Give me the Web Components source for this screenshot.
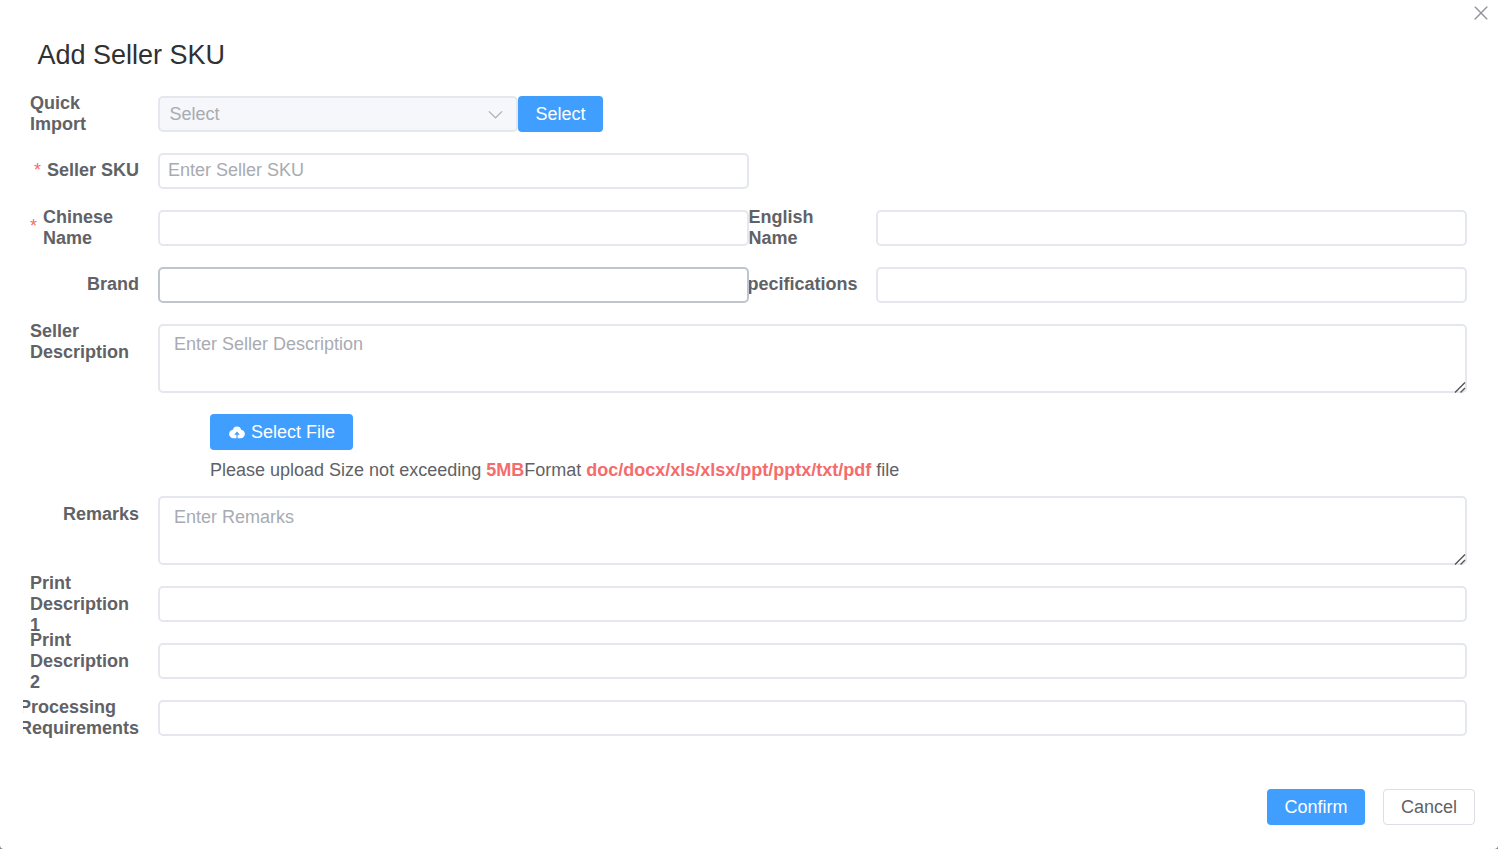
<!DOCTYPE html>
<html>
<head>
<meta charset="utf-8">
<title>Add Seller SKU</title>
<style>
html, body { margin: 0; height: 100%; background: #808080; }
body { font-family: "Liberation Sans", Arial, sans-serif; font-size: 18px; color: #606266; overflow: hidden; }
</style>
</head>
<body>

<sku-dialog>
  <span slot="title">Add Seller SKU</span>

  <form-row>
    <form-item label="Quick Import">
      <select-box>Select</select-box>
      <blue-button>Select</blue-button>
    </form-item>
  </form-row>

  <form-row half>
    <form-item label="Seller SKU" required tight><text-field tight>Enter Seller SKU</text-field></form-item>
  </form-row>

  <form-row>
    <form-item label="Chinese Name" required><text-field></text-field></form-item>
    <form-item label="English Name"><text-field></text-field></form-item>
  </form-row>

  <form-row>
    <form-item label="Brand" tight><text-field focused></text-field></form-item>
    <form-item label="Specifications" tight><text-field></text-field></form-item>
  </form-row>

  <form-row>
    <form-item label="Seller Description"><text-area>Enter Seller Description</text-area></form-item>
  </form-row>

  <upload-box></upload-box>

  <form-row>
    <form-item label="Remarks"><text-area low>Enter Remarks</text-area></form-item>
  </form-row>

  <form-row>
    <form-item label="Print Description 1"><text-field></text-field></form-item>
  </form-row>
  <form-row>
    <form-item label="Print Description 2"><text-field></text-field></form-item>
  </form-row>
  <form-row>
    <form-item label="Processing Requirements"><text-field></text-field></form-item>
  </form-row>

  <blue-button slot="footer">Confirm</blue-button>
  <plain-button slot="footer">Cancel</plain-button>
</sku-dialog>

<script>
class SkuDialog extends HTMLElement {
  constructor() {
    super()
    this.attachShadow({mode: 'open'}).innerHTML = `
<style>
:host { display: flex; flex-direction: column; height: 849px; box-sizing: border-box; background: #fff; border-radius: 0 0 4px 4px; }
header { padding: 39px 0 0 37.5px; height: 96px; box-sizing: border-box; position: relative; }
h2 { margin: 0; font-size: 27px; line-height: 33px; font-weight: 400; color: #303133; }
.close { position: absolute; top: 2px; right: 6px; width: 22px; height: 22px; fill: #909399; }
main { padding: 0 31px 0 23px; flex: 1; }
footer { display: flex; justify-content: flex-end; gap: 18px; padding: 0 23px 24px 0; }
</style>
<header>
  <h2><slot name="title"></slot></h2>
  <svg class="close" viewBox="0 0 1024 1024"><path d="M764.288 214.592 512 466.88 259.712 214.592a31.936 31.936 0 0 0-45.12 45.12L466.752 512 214.528 764.224a31.936 31.936 0 1 0 45.12 45.184L512 557.184l252.288 252.288a31.936 31.936 0 0 0 45.12-45.12L557.12 512.064l252.288-252.352a31.936 31.936 0 1 0-45.12-45.184z"/></svg>
</header>
<main><slot></slot></main>
<footer><slot name="footer"></slot></footer>`
  }
}

class FormRow extends HTMLElement {
  constructor() {
    super()
    this.attachShadow({mode: 'open'}).innerHTML = `
<style>
:host { display: grid; grid-template-columns: repeat(2, 1fr); margin-bottom: 21px; padding-left: 7px; overflow-x: clip; overflow-y: visible; }
::slotted(:only-child) { grid-column: 1 / -1; }
:host([half]) ::slotted(:only-child) { grid-column: auto; }
</style>
<slot></slot>`
  }
}

class FormItem extends HTMLElement {
  constructor() {
    super()
    const star = this.hasAttribute('required') ? '<i>*</i>' : ''
    this.attachShadow({mode: 'open'}).innerHTML = `
<style>
:host { display: flex; min-width: 0; }
:host(:nth-child(2)) { overflow-x: clip; overflow-y: visible; }
label { flex: none; box-sizing: border-box; width: 128px; height: 36px; padding-right: 19px; display: flex; align-items: center; justify-content: flex-end; font-weight: 700; line-height: 21px; color: #606266; }
:host(:nth-child(2)) label { width: 127.5px; padding-right: 18.5px; }
:host([tight]) label { height: 35px; }
i { font-style: normal; font-weight: 400; color: #f56c6c; margin: 0 6px 4px 0; }
:host([tight]) i { margin-bottom: 0; }
.control { flex: 1; min-width: 0; display: flex; }
</style>
<label>${star}<span>${this.getAttribute('label')}</span></label>
<div class="control"><slot></slot></div>`
  }
}

class TextField extends HTMLElement {
  constructor() {
    super()
    this.attachShadow({mode: 'open'}).innerHTML = `
<style>
:host { display: block; flex: 1; height: 36px; position: relative; }
input { display: block; width: 100%; height: 36px; box-sizing: border-box; border: 2px solid #e4e7ed; border-radius: 5px; padding: 0 9px; font: inherit; color: #606266; background: #fff; outline: none; }
:host([focused]) input { border-color: #c0c4cc; }
span { position: absolute; left: 10px; top: 0; line-height: 36px; color: #a8abb2; pointer-events: none; }
:host([tight]) span { line-height: 35px; }
</style>
<input type="text"><span><slot></slot></span>`
  }
}

class TextArea extends HTMLElement {
  constructor() {
    super()
    this.attachShadow({mode: 'open'}).innerHTML = `
<style>
:host { display: block; flex: 1; height: 69px; position: relative; }
textarea { display: block; width: 100%; height: 69px; box-sizing: border-box; border: 2px solid #e4e7ed; border-radius: 5px; padding: 5px 15px; font: inherit; color: #606266; background: #fff; outline: none; resize: none; }
span { position: absolute; left: 16px; top: 7px; line-height: 27px; color: #a8abb2; pointer-events: none; }
:host([low]) span { top: 8px; }
svg { position: absolute; right: 1px; bottom: 0; width: 12px; height: 12px; stroke: #555; stroke-width: 1.4; fill: none; }
</style>
<textarea></textarea><span><slot></slot></span>
<svg viewBox="0 0 12 12"><path d="M1 11.5 11 1.5M6.5 11.5 11 7"/></svg>`
  }
}

class SelectBox extends HTMLElement {
  constructor() {
    super()
    this.attachShadow({mode: 'open'}).innerHTML = `
<style>
:host { display: flex; align-items: center; justify-content: space-between; box-sizing: border-box; width: 360px; height: 36px; padding: 0 11.5px 0 9.5px; background: #f5f7fa; border: 2px solid #e4e7ed; border-radius: 5px; color: #a8abb2; }
svg { width: 19px; height: 19px; fill: #a8abb2; }
</style>
<span><slot></slot></span>
<svg viewBox="0 0 1024 1024"><path d="M831.872 340.864 512 652.672 192.128 340.864a30.592 30.592 0 0 0-42.752 0 29.12 29.12 0 0 0 0 41.6L489.664 714.24a32 32 0 0 0 44.672 0l340.288-331.712a29.12 29.12 0 0 0 0-41.728 30.592 30.592 0 0 0-42.752 0z"/></svg>`
  }
}

class BlueButton extends HTMLElement {
  constructor() {
    super()
    this.attachShadow({mode: 'open'}).innerHTML = `
<style>
:host { display: inline-flex; align-items: center; justify-content: center; gap: 5.5px; box-sizing: border-box; height: 36px; padding: 0 17.5px; background: #409eff; color: #fff; border-radius: 4px; flex: none; }
</style>
<slot></slot>`
  }
}

class PlainButton extends HTMLElement {
  constructor() {
    super()
    this.attachShadow({mode: 'open'}).innerHTML = `
<style>
:host { display: inline-flex; align-items: center; justify-content: center; box-sizing: border-box; height: 36px; padding: 0 17px; background: #fff; color: #606266; border: 1px solid #dcdfe6; border-radius: 4px; flex: none; }
</style>
<slot></slot>`
  }
}

class UploadBox extends HTMLElement {
  constructor() {
    super()
    this.attachShadow({mode: 'open'}).innerHTML = `
<style>
:host { display: block; padding-left: 187px; margin-bottom: 15px; }
svg { width: 18px; height: 18px; fill: #fff; }
p { margin: 0; padding-top: 9px; line-height: 22px; color: #606266; }
b { color: #f56c6c; }
</style>
<blue-button><svg viewBox="0 0 1024 1024"><path d="M544 864V672h128L512 480 352 672h128v192H320v-1.6c-5.376.32-10.496 1.6-16 1.6A240 240 0 0 1 64 624c0-123.136 93.12-223.488 212.608-237.248A239.808 239.808 0 0 1 512 192a239.872 239.872 0 0 1 235.456 194.752c119.488 13.76 212.48 114.112 212.48 237.248a240 240 0 0 1-240 240c-5.376 0-10.56-1.28-16-1.6v1.6H544z"/></svg>Select File</blue-button>
<p>Please upload Size not exceeding <b>5MB</b>Format <b>doc/docx/xls/xlsx/ppt/pptx/txt/pdf</b> file</p>`
  }
}

customElements.define('blue-button', BlueButton)
customElements.define('plain-button', PlainButton)
customElements.define('select-box', SelectBox)
customElements.define('text-field', TextField)
customElements.define('text-area', TextArea)
customElements.define('form-item', FormItem)
customElements.define('form-row', FormRow)
customElements.define('upload-box', UploadBox)
customElements.define('sku-dialog', SkuDialog)
</script>
</body>
</html>
